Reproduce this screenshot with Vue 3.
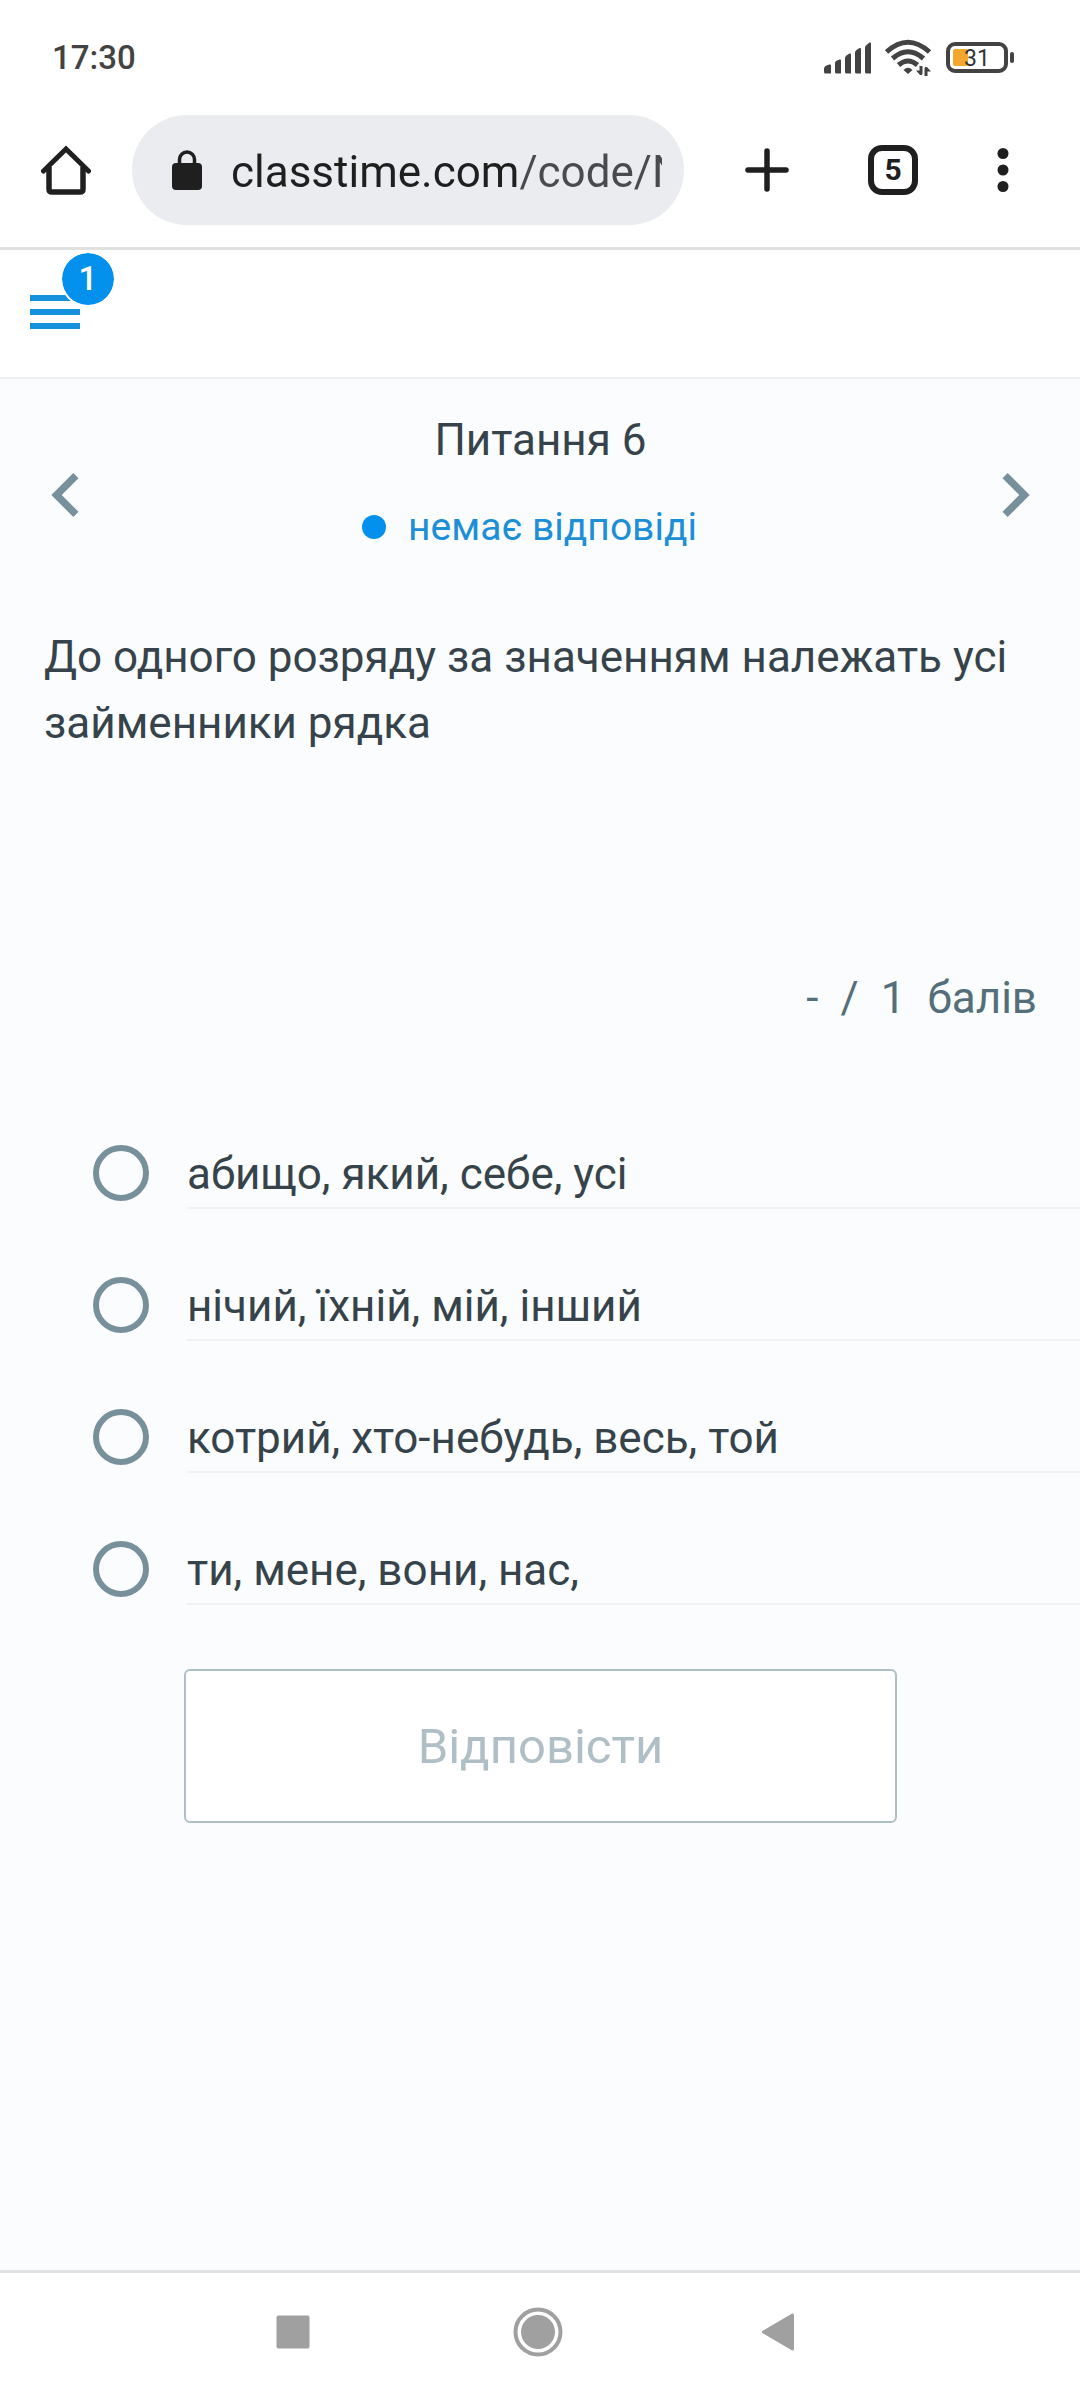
<script setup>
import { ref } from 'vue'

const url = ref('classtime.com/code/NQ4ZLU')
const picked = ref(null)
const options = [
  'абищо, який, себе, усі',
  'нічий, їхній, мій, інший',
  'котрий, хто-небудь, весь, той',
  'ти, мене, вони, нас,',
]
</script>

<template>
  <div class="screen">
    <div class="status-bar">
      <span class="clock">17:30</span>
      <div class="indicators">
        <svg width="48" height="32" viewBox="0 0 48 32" fill="#434343">
          <path d="M0 26.500Q0 25 1.500 24L5 22.500Q7 22 7 23.500V31.500H1.500Q0 31.500 0 30Z" />
          <path d="M11 21Q11 19.500 12.500 18.800L15.500 17.500Q17 17 17 18.500V31.500H12.500Q11 31.500 11 30Z" />
          <path d="M21 16Q21 14.500 22.500 13.500L25.500 11.500Q27 11 27 12.500V31.500H22.500Q21 31.500 21 30Z" />
          <path d="M31 10.500Q31 9 32.500 8L35.500 6Q37 5.500 37 7V31.500H32.500Q31 31.500 31 30Z" />
          <path d="M41 5.500Q41 4 42.500 3L45.500 .5Q47 0 47 1.500V31.500H42.500Q41 31.500 41 30Z" />
        </svg>
        <svg width="48" height="38" viewBox="0 0 48 38" fill="none" stroke="#434343" stroke-width="5">
          <path d="M1.500 13Q23 -6.500 44.500 13" />
          <path d="M7.500 19.500Q23 6 38.500 19.500" />
          <path d="M13.500 26Q23 18 32.500 26" />
          <path d="M18.500 31Q23 26.500 27.500 31L23 35Z" fill="#434343" stroke="none" />
          <path d="M36 27V35M41 37V29" stroke-width="3" />
          <path d="M31 31.500H37V36H35ZM40 28H42L46 32.500H40Z" fill="#434343" stroke="none" />
        </svg>
        <svg width="70" height="32" viewBox="0 0 70 32">
          <rect x="2" y="2" width="58" height="27" rx="7" fill="none" stroke="#434343" stroke-width="4" />
          <rect x="7" y="7" width="15" height="17" rx="2" fill="#f3a72e" />
          <rect x="64" y="10" width="4" height="11" rx="2" fill="#434343" />
          <text x="31" y="24" text-anchor="middle" font-size="23" fill="#333">31</text>
        </svg>
      </div>
    </div>

    <div class="browser-bar">
      <button class="icon-button" aria-label="Головна">
        <svg width="50" height="50" viewBox="0 0 50 50" fill="none" stroke="#1f1f1f">
          <path d="M8 22V44Q8 47 11 47H39Q42 47 42 44V22" stroke-width="5.500" />
          <path d="M2.500 26L25 4L47.500 26" stroke-width="5" stroke-linecap="round" />
        </svg>
      </button>
      <div class="address">
        <svg width="30" height="40" viewBox="0 0 30 40">
          <rect x="0" y="13" width="30" height="27" rx="4" fill="#1f1f1f" />
          <path d="M7.500 15V9.500A7.500 7.500 0 0 1 22.500 9.500V15" fill="none" stroke="#1f1f1f" stroke-width="3.500" />
        </svg>
        <input v-model="url" class="url" type="text" aria-label="Адреса" />
      </div>
      <button class="icon-button plus" aria-label="Нова вкладка">
        <svg width="44" height="44" viewBox="0 0 44 44" stroke="#1f1f1f" stroke-width="5.500" stroke-linecap="round">
          <path d="M22 3V41M3 22H41" />
        </svg>
      </button>
      <button class="tabs" aria-label="Вкладки">5</button>
      <button class="icon-button more" aria-label="Меню">
        <svg width="12" height="46" viewBox="0 0 12 46" fill="#1f1f1f">
          <circle cx="6" cy="6.500" r="5.500" />
          <circle cx="6" cy="23" r="5.500" />
          <circle cx="6" cy="39.500" r="5.500" />
        </svg>
      </button>
    </div>

    <header class="app-header">
      <button class="menu" aria-label="Список питань">
        <svg width="50" height="34" viewBox="0 0 50 34" fill="#1590dc">
          <rect width="50" height="6" />
          <rect y="14" width="50" height="6" />
          <rect y="28" width="50" height="6" />
        </svg>
        <span class="badge">1</span>
      </button>
    </header>

    <main class="content">
      <div class="question-nav">
        <button class="icon-button" aria-label="Попереднє питання">
          <svg width="88" height="88" viewBox="0 0 24 24" fill="#78909c">
            <path d="M15.410 7.410L14 6l-6 6 6 6 1.410-1.410L10.830 12z" />
          </svg>
        </button>
        <div class="heading">
          <h1>Питання 6</h1>
          <p class="state"><span class="dot"></span>немає відповіді</p>
        </div>
        <button class="icon-button" aria-label="Наступне питання">
          <svg width="88" height="88" viewBox="0 0 24 24" fill="#78909c">
            <path d="M10 6L8.590 7.410 13.170 12l-4.580 4.590L10 18l6-6z" />
          </svg>
        </button>
      </div>

      <p class="question">До одного розряду за значенням належать усі займенники рядка</p>

      <p class="points"><span>-</span><span>/</span><span>1</span><span>балів</span></p>

      <form @submit.prevent>
        <ul class="options">
          <li v-for="(option, i) in options" :key="i" class="option">
            <input :id="`option-${i}`" v-model="picked" type="radio" name="answer" :value="i" />
            <label :for="`option-${i}`">{{ option }}</label>
          </li>
        </ul>
        <button class="submit" type="submit">Відповісти</button>
      </form>
    </main>

    <nav class="system-nav">
      <button class="icon-button" aria-label="Останні програми">
        <svg width="50" height="50" viewBox="0 0 50 50"><rect x="8.500" y="8.500" width="33" height="33" rx="2" fill="#a0a0a0" /></svg>
      </button>
      <button class="icon-button" aria-label="Додому">
        <svg width="50" height="50" viewBox="0 0 50 50">
          <circle cx="25" cy="25" r="22.500" fill="none" stroke="#a0a0a0" stroke-width="4" />
          <circle cx="25" cy="25" r="17" fill="#a0a0a0" />
        </svg>
      </button>
      <button class="icon-button" aria-label="Назад">
        <svg width="50" height="50" viewBox="0 0 50 50">
          <path d="M5.500 25L34.500 8V42Z" fill="#a0a0a0" stroke="#a0a0a0" stroke-width="3" stroke-linejoin="round" />
        </svg>
      </button>
    </nav>
  </div>
</template>

<style>
body {
  background: #fff;
}
</style>

<style scoped>
.screen {
  display: flex;
  flex-direction: column;
  min-height: 100vh;
  font-family: Roboto, "Noto Sans", sans-serif;
  font-size: 44px;
  color: #37434a;
  background: #fff;
}
button,
input {
  font: inherit;
  margin: 0;
  padding: 0;
  border: 0;
  background: none;
  color: inherit;
}
svg {
  display: block;
}
h1,
p,
ul {
  margin: 0;
  padding: 0;
  font-weight: 400;
}
.icon-button {
  flex: none;
}
.status-bar {
  display: flex;
  justify-content: space-between;
  align-items: center;
  height: 34px;
  padding: 41px 64px 0 52px;
}
.clock {
  font-size: 33px;
  line-height: 34px;
  font-weight: 500;
  color: #434343;
}
.indicators {
  display: flex;
  align-items: center;
  gap: 13px;
}
.browser-bar {
  display: flex;
  align-items: center;
  padding: 40px 71px 22px 41px;
  border-bottom: 3px solid #e0e0e0;
}
.address {
  flex: 1;
  min-width: 0;
  display: flex;
  align-items: center;
  gap: 29px;
  height: 110px;
  margin-left: 41px;
  padding: 0 22px 0 40px;
  box-sizing: border-box;
  border-radius: 55px;
  background: #ebecf0;
}
.url {
  flex: 1;
  min-width: 0;
  height: 60px;
  padding-top: 4px;
  color: transparent;
  caret-color: #1f1f1f;
  background: linear-gradient(90deg, #1f1f1f 288px, #484a4d 288px);
  background-clip: text;
  outline: none;
}
.plus {
  margin-left: 61px;
}
.tabs {
  flex: none;
  width: 50px;
  height: 50px;
  margin-left: 79px;
  border: 6px solid #1f1f1f;
  border-radius: 14px;
  font-size: 30px;
  line-height: 38px;
  font-weight: 700;
  color: #1f1f1f;
}
.more {
  margin-left: 79px;
}
.app-header {
  padding: 45px 30px 48px;
  border-bottom: 2px solid #eeeff1;
}
.menu {
  position: relative;
  display: block;
}
.badge {
  position: absolute;
  left: 30px;
  top: -44px;
  width: 52px;
  height: 52px;
  border: 2px solid #fff;
  border-radius: 50%;
  background: #0491ee;
  background-clip: padding-box;
  color: #fff;
  font-size: 33px;
  line-height: 52px;
  font-weight: 500;
}
.content {
  flex: 1;
  background: #fafcfe;
}
.question-nav {
  display: flex;
  align-items: center;
  padding: 31px 21px 0 22px;
}
.heading {
  flex: 1;
  padding-bottom: 28px;
  text-align: center;
}
h1 {
  font-size: 44px;
  line-height: 60px;
}
.state {
  display: flex;
  align-items: center;
  justify-content: center;
  gap: 22px;
  margin-top: 32px;
  padding-right: 22px;
  font-size: 39px;
  line-height: 50px;
  color: #1c8fd6;
}
.dot {
  width: 24px;
  height: 24px;
  border-radius: 50%;
  background: #0491ee;
}
.question {
  margin: 44px 44px 0;
  line-height: 66px;
}
.points {
  display: flex;
  justify-content: flex-end;
  gap: 22px;
  margin-top: 209px;
  padding-right: 43px;
  line-height: 66px;
  color: #546e7a;
}
.options {
  margin-top: 46px;
  padding-left: 93px;
  list-style: none;
}
.option {
  display: flex;
  align-items: flex-start;
  gap: 38px;
  padding-top: 64px;
}
.option input {
  appearance: none;
  flex: none;
  width: 56px;
  height: 56px;
  margin-top: 4px;
  border: 6px solid #78909c;
  border-radius: 50%;
}
.option input:checked {
  background: radial-gradient(circle, #0491ee 12px, transparent 13px);
}
.option label {
  flex: 1;
  line-height: 66px;
  border-bottom: 2px solid #f0f2f4;
}
.submit {
  display: block;
  width: calc(100% - 367px);
  height: 154px;
  margin: 64px 183px 64px 184px;
  border: 2px solid #b0bec5;
  border-radius: 6px;
  background: #fff;
  font-size: 49px;
  color: #b0bec5;
}
.system-nav {
  display: flex;
  align-items: center;
  justify-content: center;
  gap: 195px;
  height: 118px;
  padding: 0 5px 9px 0;
  border-top: 3px solid #dfe1e4;
}
</style>
